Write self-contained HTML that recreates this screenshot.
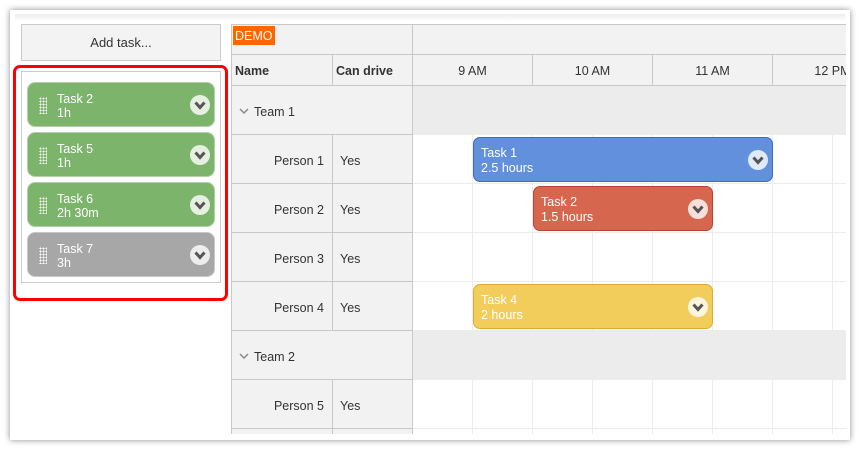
<!DOCTYPE html>
<html><head><style>
*{margin:0;padding:0;box-sizing:border-box}
body{width:860px;height:449px;background:#fff;position:relative;overflow:hidden;font-family:"Segoe UI","Liberation Sans",sans-serif;font-size:12.5px;color:#333}
.a{position:absolute}
.win{left:10px;top:10px;width:840px;height:430px;background:#fff;box-shadow:0 0 6px rgba(0,0,0,.45)}
.strip{left:15px;top:14px;width:830px;height:8px;background:linear-gradient(#eee,#fff)}
.btn{left:21px;top:24px;width:200px;height:37px;border:1px solid #ccc;background:#f3f3f3;text-align:center;line-height:36px;font-size:13px}
.red{left:13px;top:65px;width:215px;height:236px;border:3px solid #f00;border-radius:7px}
.inner{left:21px;top:71px;width:200px;height:212px;border:1px solid #ccc}
.card{left:27px;width:188px;height:45px;border-radius:8px;background:#7db46c;border:1px solid #b5cfae;color:#fff;font-size:12.5px;line-height:14px;padding:9px 0 0 29px}
.grip{position:absolute;left:11px;top:14px;width:8px;height:17px;background:radial-gradient(circle,#fff 0.8px,transparent 1px) 0 0/3px 3px}
.chev{position:absolute;width:20px;height:20px;border-radius:50%;background:rgba(255,255,255,.8)}
.chev svg{position:absolute;left:4px;top:6px}
.cell{position:absolute;background:#f2f2f2;border-right:1px solid #c8c8c8;border-bottom:1px solid #c8c8c8}
.r{line-height:48px;padding-top:2px}
.bar{position:absolute;border-radius:7px;color:#fff;font-size:12.5px;line-height:15px;padding:8px 0 0 7px}
</style></head><body>
<div class="a win"></div>
<div class="a strip"></div>
<div class="a btn">Add task...</div>
<div class="a red"></div>
<div class="a inner"></div>

<div class="a card" style="top:82px"><div class="grip"></div>Task 2<br>1h<div class="chev" style="left:162px;top:12px"><svg width="12" height="9"><path d="M1.5 1.5L6 6.5L10.5 1.5" stroke="#555" stroke-width="3" fill="none"/></svg></div></div>
<div class="a card" style="top:132px"><div class="grip"></div>Task 5<br>1h<div class="chev" style="left:162px;top:12px"><svg width="12" height="9"><path d="M1.5 1.5L6 6.5L10.5 1.5" stroke="#555" stroke-width="3" fill="none"/></svg></div></div>
<div class="a card" style="top:182px"><div class="grip"></div>Task 6<br>2h 30m<div class="chev" style="left:162px;top:12px"><svg width="12" height="9"><path d="M1.5 1.5L6 6.5L10.5 1.5" stroke="#555" stroke-width="3" fill="none"/></svg></div></div>
<div class="a card" style="top:232px;background:#a7a7a7;border-color:#c8c8c8"><div class="grip"></div>Task 7<br>3h<div class="chev" style="left:162px;top:12px"><svg width="12" height="9"><path d="M1.5 1.5L6 6.5L10.5 1.5" stroke="#555" stroke-width="3" fill="none"/></svg></div></div>

<div class="a" style="left:231px;top:24px;width:615px;height:410px;overflow:hidden;border-left:1px solid #c8c8c8">
 <div class="cell" style="left:0;top:0;width:181px;height:31px;border-top:1px solid #c8c8c8"></div>
 <div class="a" style="left:1px;top:2px;width:42px;height:19px;background:#f60;color:#fff;font-size:12.5px;line-height:20px;padding-left:2px">DEMO</div>
 <div class="cell" style="left:181px;top:0;width:434px;height:31px;border-top:1px solid #c8c8c8;border-right:0"></div>
 <div class="cell" style="left:0;top:31px;width:101px;height:31px;font-weight:bold;line-height:32px;padding-left:3px">Name</div>
 <div class="cell" style="left:101px;top:31px;width:80px;height:31px;font-weight:bold;line-height:32px;padding-left:3px">Can drive</div>
 <div class="cell" style="left:181px;top:31px;width:120px;height:31px;text-align:center;line-height:32px">9 AM</div>
 <div class="cell" style="left:301px;top:31px;width:120px;height:31px;text-align:center;line-height:32px">10 AM</div>
 <div class="cell" style="left:421px;top:31px;width:120px;height:31px;text-align:center;line-height:32px">11 AM</div>
 <div class="cell" style="left:541px;top:31px;width:120px;height:31px;text-align:center;line-height:32px">12 PM</div>
 <div class="a" style="left:181px;top:62px;width:434px;height:350px;background:repeating-linear-gradient(90deg,transparent 0 59px,#ececec 59px 60px);"></div>
 <div class="a" style="left:181px;top:62px;width:434px;height:350px;background:repeating-linear-gradient(180deg,transparent 0 48px,#ececec 48px 49px);"></div>
 <div class="a" style="left:181px;top:62px;width:434px;height:48px;background:#ececec"></div>
 <div class="a" style="left:181px;top:307px;width:434px;height:48px;background:#ececec"></div>
 <div class="cell r" style="left:0;top:62px;width:181px;height:49px;padding-left:22px">Team 1<svg class="a" style="left:7px;top:22px" width="10" height="7"><path d="M1 1L5 5L9 1" stroke="#888" stroke-width="1.5" fill="none"/></svg></div>
 <div class="cell r" style="left:0;top:111px;width:101px;height:49px;text-align:right;padding-right:8px">Person 1</div>
 <div class="cell r" style="left:101px;top:111px;width:80px;height:49px;padding-left:7px">Yes</div>
 <div class="cell r" style="left:0;top:160px;width:101px;height:49px;text-align:right;padding-right:8px">Person 2</div>
 <div class="cell r" style="left:101px;top:160px;width:80px;height:49px;padding-left:7px">Yes</div>
 <div class="cell r" style="left:0;top:209px;width:101px;height:49px;text-align:right;padding-right:8px">Person 3</div>
 <div class="cell r" style="left:101px;top:209px;width:80px;height:49px;padding-left:7px">Yes</div>
 <div class="cell r" style="left:0;top:258px;width:101px;height:49px;text-align:right;padding-right:8px">Person 4</div>
 <div class="cell r" style="left:101px;top:258px;width:80px;height:49px;padding-left:7px">Yes</div>
 <div class="cell r" style="left:0;top:307px;width:181px;height:49px;padding-left:22px">Team 2<svg class="a" style="left:7px;top:22px" width="10" height="7"><path d="M1 1L5 5L9 1" stroke="#888" stroke-width="1.5" fill="none"/></svg></div>
 <div class="cell r" style="left:0;top:356px;width:101px;height:49px;text-align:right;padding-right:8px">Person 5</div>
 <div class="cell r" style="left:101px;top:356px;width:80px;height:49px;padding-left:7px">Yes</div>
 <div class="cell" style="left:0;top:405px;width:101px;height:10px"></div>
 <div class="cell" style="left:101px;top:405px;width:80px;height:10px"></div>
 <div class="bar" style="left:241px;top:113px;width:300px;height:45px;background:#6390dd;border:1px solid #3c6cc5">Task 1<br>2.5 hours<div class="chev" style="left:274px;top:12px"><svg width="12" height="9"><path d="M1.5 1.5L6 6.5L10.5 1.5" stroke="#555" stroke-width="3" fill="none"/></svg></div></div>
 <div class="bar" style="left:301px;top:162px;width:180px;height:45px;background:#d7664f;border:1px solid #b84330">Task 2<br>1.5 hours<div class="chev" style="left:154px;top:12px"><svg width="12" height="9"><path d="M1.5 1.5L6 6.5L10.5 1.5" stroke="#555" stroke-width="3" fill="none"/></svg></div></div>
 <div class="bar" style="left:241px;top:260px;width:240px;height:45px;background:#f2cd5c;border:1px solid #dcae2e">Task 4<br>2 hours<div class="chev" style="left:214px;top:12px"><svg width="12" height="9"><path d="M1.5 1.5L6 6.5L10.5 1.5" stroke="#555" stroke-width="3" fill="none"/></svg></div></div>
</div>
</body></html>
